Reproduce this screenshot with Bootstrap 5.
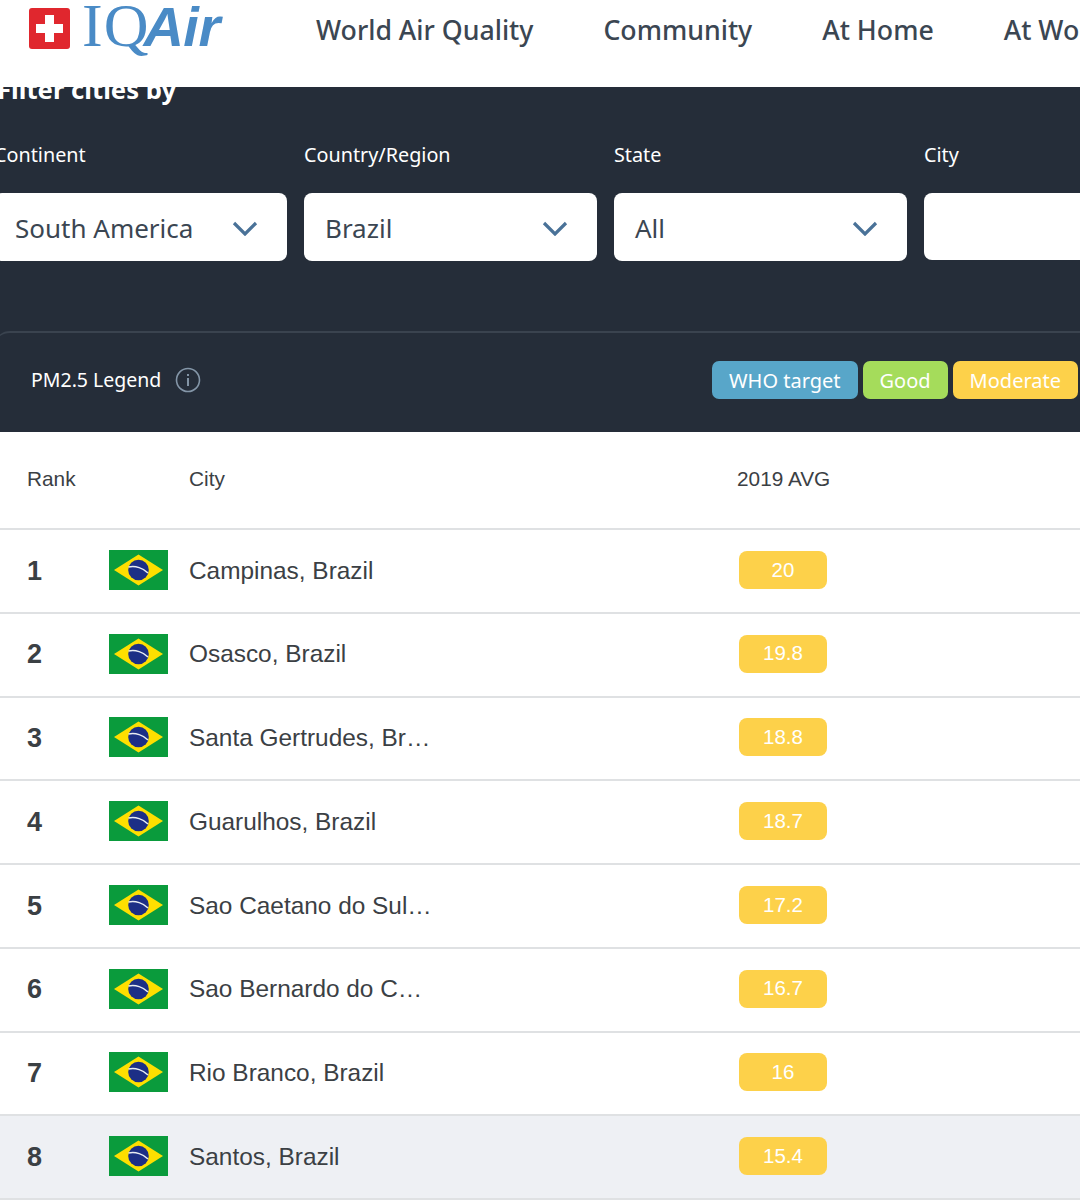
<!DOCTYPE html>
<html lang="en">
<head>
  <meta charset="UTF-8" />
  <title>IQAir Brazil ranking</title>
  <link href="https://cdn.jsdelivr.net/npm/bootstrap@5.3.0/dist/css/bootstrap.min.css" rel="stylesheet" />
  <style>
    body { width: 1080px; height: 1200px; overflow: hidden; font-family: "Noto Sans", "Open Sans", sans-serif; color: #3b4652; }
    .top-nav { height: 87px; padding: 0 0 26px 29px; flex-wrap: nowrap; white-space: nowrap; }
    .logo-box { width: 41px; height: 41px; background: #e0272e; border-radius: 3px; margin-top: -4px; flex: none; }
    .logo-text { line-height: 58px; color: #4a8bc6; margin-left: 12px; margin-top: 3px; width: 234px; flex: none; }
    .logo-iq { font-family: "Liberation Serif", serif; font-size: 62px; letter-spacing: 1px; }
    .logo-air { font-family: "Liberation Sans", sans-serif; font-size: 56px; font-weight: 700; font-style: italic; letter-spacing: -.5px; margin-left: -6px; }
    .main-link { font-size: 26.7px; font-weight: 500; color: #3b4652; text-decoration: none; margin-right: 70px; }
    .dark-panel { background: #252d39; height: 345px; overflow: hidden; color: #fff; }
    .filter-title { font-size: 25.7px; font-weight: 700; line-height: 32px; margin: -13px 0 0 -3px; }
    .filter-row { gap: 17px; margin-left: -6px; margin-top: 35px; }
    .filter-col { width: 293px; flex: none; }
    .filter-label { font-size: 19.8px; line-height: 28px; margin-bottom: 24px; }
    .fake-select { height: 68px; background: #fff; border-radius: 8px; color: #3b4652; font-size: 26px; padding: 3px 29px 0 21px; }
    .city-input { height: 67px; width: 293px; }
    .legend-bar { height: 102px; margin-top: 70px; margin-left: -6px; border-top: 2px solid #3a434f; border-top-left-radius: 16px; padding: 0 0 6px 37px; }
    .legend-name { font-size: 19.5px; margin-right: 14px; }
    .legend-tag { height: 38.5px; border-radius: 7px; font-size: 20px; padding: 2px 17px 0; color: #fff; margin-left: 5px; }
    .tag-who { background: #58a6c9; margin-left: auto; }
    .tag-good { background: #a5dc5b; }
    .tag-mod { background: #fdd14a; margin-left: 5px; margin-right: 2px; }
    .rank-table { table-layout: fixed; width: 1080px; margin: 0; font-family: "Liberation Sans", Arial, sans-serif; color: #3b4044; }
    .rank-table th { height: 97px; font-size: 20.8px; font-weight: 400; vertical-align: middle; padding: 0 0 2px; border-bottom: 2px solid #dfe1e3; }
    .rank-table td { height: 83.75px; font-size: 24.4px; vertical-align: middle; padding: 0; border-bottom: 2px solid #dfe1e3; }
    .rank-table td.lift-cell { padding-bottom: 2px; }
    .rank-table tr.hilite td { background: #eef0f4; --bs-table-bg: #eef0f4; }
    .rank-table td.col-rank { padding-left: 27px; font-size: 27px; font-weight: 700; }
    .rank-table th.head-rank { padding-left: 27px; }
    .city-name { max-width: 243px; }
    .avg-pill { width: 88px; height: 38px; background: #fdd14a; border-radius: 8px; color: #fff; font-size: 20.5px; margin-left: 2px; }
    .flag-pic { display: block; }
  </style>
</head>
<body>
  <nav class="navbar bg-white top-nav d-flex justify-content-start align-items-center">
    <div class="logo-box d-flex align-items-center justify-content-center">
      <svg width="27" height="27" viewBox="0 0 27 27"><path d="M9 0h9v9h9v9h-9v9H9v-9H0V9h9z" fill="#fff"/></svg>
    </div>
    <div class="logo-text"><span class="logo-iq">IQ</span><span class="logo-air">Air</span></div>
    <a class="main-link" href="#">World Air Quality</a>
    <a class="main-link" href="#">Community</a>
    <a class="main-link" href="#">At Home</a>
    <a class="main-link" href="#">At Work</a>
  </nav>

  <section class="dark-panel">
    <h2 class="filter-title">Filter cities by</h2>
    <div class="d-flex filter-row">
      <div class="filter-col">
        <div class="filter-label">Continent</div>
        <div class="fake-select d-flex align-items-center justify-content-between">South America
          <svg width="26" height="15" viewBox="0 0 26 15"><path d="M2 2l11 11L24 2" fill="none" stroke="#4a7298" stroke-width="3.2"/></svg>
        </div>
      </div>
      <div class="filter-col">
        <div class="filter-label">Country/Region</div>
        <div class="fake-select d-flex align-items-center justify-content-between">Brazil
          <svg width="26" height="15" viewBox="0 0 26 15"><path d="M2 2l11 11L24 2" fill="none" stroke="#4a7298" stroke-width="3.2"/></svg>
        </div>
      </div>
      <div class="filter-col">
        <div class="filter-label">State</div>
        <div class="fake-select d-flex align-items-center justify-content-between">All
          <svg width="26" height="15" viewBox="0 0 26 15"><path d="M2 2l11 11L24 2" fill="none" stroke="#4a7298" stroke-width="3.2"/></svg>
        </div>
      </div>
      <div class="filter-col">
        <div class="filter-label">City</div>
        <div class="fake-select city-input"></div>
      </div>
    </div>
    <div class="legend-bar d-flex align-items-center">
      <span class="legend-name">PM2.5 Legend</span>
      <svg width="26" height="26" viewBox="0 0 26 26"><circle cx="13" cy="13" r="11.5" fill="none" stroke="#8496a8" stroke-width="1.6"/><path d="M13 11v8M13 7v2" stroke="#8ea0b2" stroke-width="1.8"/></svg>
      <span class="legend-tag tag-who d-flex align-items-center">WHO target</span>
      <span class="legend-tag tag-good d-flex align-items-center">Good</span>
      <span class="legend-tag tag-mod d-flex align-items-center">Moderate</span>
    </div>
  </section>

  <svg width="0" height="0" class="position-absolute">
    <symbol id="br-flag" viewBox="0 0 59 40">
      <rect width="59" height="40" fill="#0a9b3c"/>
      <path d="M29.5 4.5L54 20 29.5 35.5 5 20z" fill="#fedf00"/>
      <circle cx="29.5" cy="20" r="10.3" fill="#1c2f86"/>
      <path d="M19.5 17c7-1.5 15 1 19.5 6" fill="none" stroke="#e9edf2" stroke-width="1.4"/>
    </symbol>
  </svg>

  <table class="table rank-table">
    <thead>
      <tr><th class="head-rank" style="width:109px">Rank</th><th style="width:80px"></th><th style="width:548px">City</th><th>2019 AVG</th></tr>
    </thead>
    <tbody id="rows"></tbody>
  </table>

  <script>
    const cities = [
      ['Campinas, Brazil', '20'], ['Osasco, Brazil', '19.8'], ['Santa Gertrudes, Brazil', '18.8'],
      ['Guarulhos, Brazil', '18.7'], ['Sao Caetano do Sul, Brazil', '17.2'], ['Sao Bernardo do Campo, Brazil', '16.7'],
      ['Rio Branco, Brazil', '16'], ['Santos, Brazil', '15.4']
    ];
    document.getElementById('rows').innerHTML = cities.map((c, i) => `
      <tr class="${i === 7 ? 'hilite' : ''}">
        <td class="col-rank">${i + 1}</td>
        <td class="lift-cell"><svg class="flag-pic" width="59" height="40"><use href="#br-flag"/></svg></td>
        <td><div class="text-truncate city-name">${c[0]}</div></td>
        <td class="lift-cell"><div class="avg-pill d-flex align-items-center justify-content-center">${c[1]}</div></td>
      </tr>`).join('');
  </script>
  <script src="https://cdn.jsdelivr.net/npm/bootstrap@5.3.0/dist/js/bootstrap.bundle.min.js"></script>
</body>
</html>
